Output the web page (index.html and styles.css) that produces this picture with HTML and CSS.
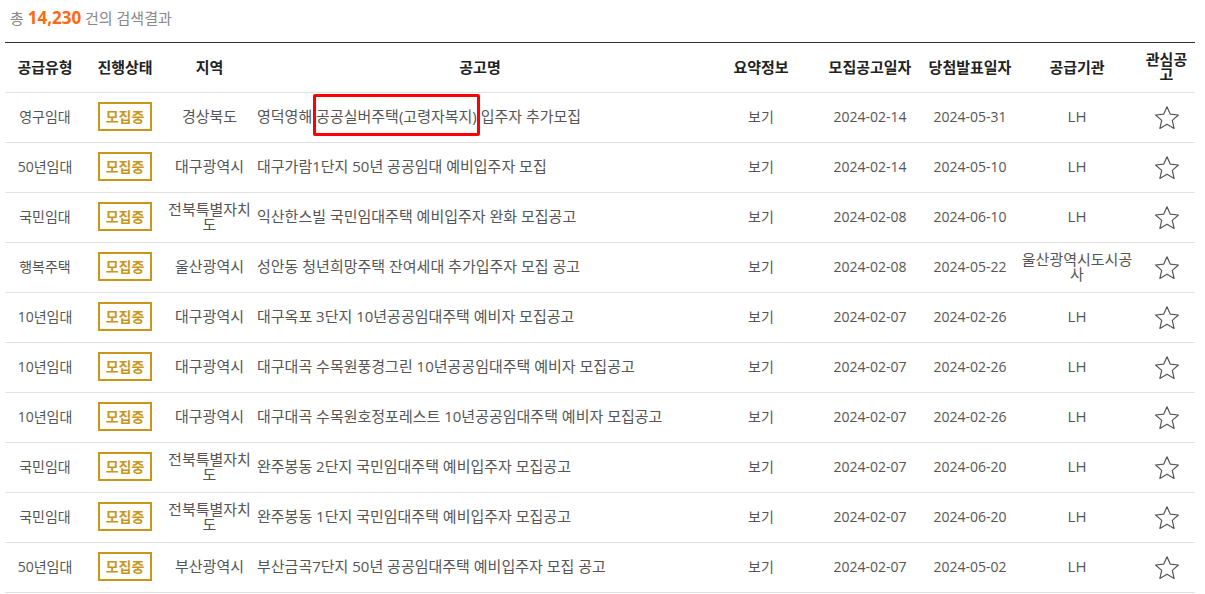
FILE: index.html
```html
<!DOCTYPE html>
<html lang="ko">
<head>
<meta charset="utf-8">
<title>검색결과</title>
<link rel="stylesheet" href="styles.css">
</head>
<body>
<div class="wrap">
  <p class="summary">총 <strong class="count">14,230</strong> 건의 검색결과</p>
  <table class="list">
    <colgroup>
      <col class="c-type"><col class="c-state"><col class="c-region"><col class="c-name"><col class="c-info"><col class="c-date"><col class="c-date2"><col class="c-org"><col class="c-fav">
    </colgroup>
    <thead>
      <tr>
        <th>공급유형</th><th>진행상태</th><th>지역</th><th>공고명</th><th>요약정보</th><th>모집공고일자</th><th>당첨발표일자</th><th>공급기관</th><th>관심공고</th>
      </tr>
    </thead>
    <tbody>
      <tr>
        <td class="type">영구임대</td><td><span class="badge">모집중</span></td><td class="region">경상북도</td>
        <td class="name">영덕영해 <span class="mark">공공실버주택(고령자복지)</span> 입주자 추가모집</td>
        <td>보기</td><td>2024-02-14</td><td>2024-05-31</td><td class="org">LH</td>
        <td><svg class="star" viewBox="0 0 26 26"><path d="M13 1.8 L16.3 9.2 L24.4 10 L18.3 15.4 L20.1 23.4 L13 19.2 L5.9 23.4 L7.7 15.4 L1.6 10 L9.7 9.2 Z"/></svg></td>
      </tr>
      <tr>
        <td class="type">50년임대</td><td><span class="badge">모집중</span></td><td class="region">대구광역시</td>
        <td class="name">대구가람1단지 50년 공공임대 예비입주자 모집</td>
        <td>보기</td><td>2024-02-14</td><td>2024-05-10</td><td class="org">LH</td>
        <td><svg class="star" viewBox="0 0 26 26"><path d="M13 1.8 L16.3 9.2 L24.4 10 L18.3 15.4 L20.1 23.4 L13 19.2 L5.9 23.4 L7.7 15.4 L1.6 10 L9.7 9.2 Z"/></svg></td>
      </tr>
      <tr>
        <td class="type">국민임대</td><td><span class="badge">모집중</span></td><td class="region">전북특별자치도</td>
        <td class="name">익산한스빌 국민임대주택 예비입주자 완화 모집공고</td>
        <td>보기</td><td>2024-02-08</td><td>2024-06-10</td><td class="org">LH</td>
        <td><svg class="star" viewBox="0 0 26 26"><path d="M13 1.8 L16.3 9.2 L24.4 10 L18.3 15.4 L20.1 23.4 L13 19.2 L5.9 23.4 L7.7 15.4 L1.6 10 L9.7 9.2 Z"/></svg></td>
      </tr>
      <tr>
        <td class="type">행복주택</td><td><span class="badge">모집중</span></td><td class="region">울산광역시</td>
        <td class="name">성안동 청년희망주택 잔여세대 추가입주자 모집 공고</td>
        <td>보기</td><td>2024-02-08</td><td>2024-05-22</td><td class="org">울산광역시도시공사</td>
        <td><svg class="star" viewBox="0 0 26 26"><path d="M13 1.8 L16.3 9.2 L24.4 10 L18.3 15.4 L20.1 23.4 L13 19.2 L5.9 23.4 L7.7 15.4 L1.6 10 L9.7 9.2 Z"/></svg></td>
      </tr>
      <tr>
        <td class="type">10년임대</td><td><span class="badge">모집중</span></td><td class="region">대구광역시</td>
        <td class="name">대구옥포 3단지 10년공공임대주택 예비자 모집공고</td>
        <td>보기</td><td>2024-02-07</td><td>2024-02-26</td><td class="org">LH</td>
        <td><svg class="star" viewBox="0 0 26 26"><path d="M13 1.8 L16.3 9.2 L24.4 10 L18.3 15.4 L20.1 23.4 L13 19.2 L5.9 23.4 L7.7 15.4 L1.6 10 L9.7 9.2 Z"/></svg></td>
      </tr>
      <tr>
        <td class="type">10년임대</td><td><span class="badge">모집중</span></td><td class="region">대구광역시</td>
        <td class="name">대구대곡 수목원풍경그린 10년공공임대주택 예비자 모집공고</td>
        <td>보기</td><td>2024-02-07</td><td>2024-02-26</td><td class="org">LH</td>
        <td><svg class="star" viewBox="0 0 26 26"><path d="M13 1.8 L16.3 9.2 L24.4 10 L18.3 15.4 L20.1 23.4 L13 19.2 L5.9 23.4 L7.7 15.4 L1.6 10 L9.7 9.2 Z"/></svg></td>
      </tr>
      <tr>
        <td class="type">10년임대</td><td><span class="badge">모집중</span></td><td class="region">대구광역시</td>
        <td class="name">대구대곡 수목원호정포레스트 10년공공임대주택 예비자 모집공고</td>
        <td>보기</td><td>2024-02-07</td><td>2024-02-26</td><td class="org">LH</td>
        <td><svg class="star" viewBox="0 0 26 26"><path d="M13 1.8 L16.3 9.2 L24.4 10 L18.3 15.4 L20.1 23.4 L13 19.2 L5.9 23.4 L7.7 15.4 L1.6 10 L9.7 9.2 Z"/></svg></td>
      </tr>
      <tr>
        <td class="type">국민임대</td><td><span class="badge">모집중</span></td><td class="region">전북특별자치도</td>
        <td class="name">완주봉동 2단지 국민임대주택 예비입주자 모집공고</td>
        <td>보기</td><td>2024-02-07</td><td>2024-06-20</td><td class="org">LH</td>
        <td><svg class="star" viewBox="0 0 26 26"><path d="M13 1.8 L16.3 9.2 L24.4 10 L18.3 15.4 L20.1 23.4 L13 19.2 L5.9 23.4 L7.7 15.4 L1.6 10 L9.7 9.2 Z"/></svg></td>
      </tr>
      <tr>
        <td class="type">국민임대</td><td><span class="badge">모집중</span></td><td class="region">전북특별자치도</td>
        <td class="name">완주봉동 1단지 국민임대주택 예비입주자 모집공고</td>
        <td>보기</td><td>2024-02-07</td><td>2024-06-20</td><td class="org">LH</td>
        <td><svg class="star" viewBox="0 0 26 26"><path d="M13 1.8 L16.3 9.2 L24.4 10 L18.3 15.4 L20.1 23.4 L13 19.2 L5.9 23.4 L7.7 15.4 L1.6 10 L9.7 9.2 Z"/></svg></td>
      </tr>
      <tr>
        <td class="type">50년임대</td><td><span class="badge">모집중</span></td><td class="region">부산광역시</td>
        <td class="name">부산금곡7단지 50년 공공임대주택 예비입주자 모집 공고</td>
        <td>보기</td><td>2024-02-07</td><td>2024-05-02</td><td class="org">LH</td>
        <td><svg class="star" viewBox="0 0 26 26"><path d="M13 1.8 L16.3 9.2 L24.4 10 L18.3 15.4 L20.1 23.4 L13 19.2 L5.9 23.4 L7.7 15.4 L1.6 10 L9.7 9.2 Z"/></svg></td>
      </tr>
    </tbody>
  </table>
</div>
</body>
</html>
```

FILE: styles.css
```css
* { box-sizing: border-box; }
html, body { margin: 0; padding: 0; background: #fff; }
body {
  font-family: "Open Sans", "Noto Sans CJK KR", sans-serif;
  font-size: 14px;
  color: #555;
}
.wrap { padding: 0 10px 0 5px; }
.summary {
  margin: 0;
  height: 42px;
  padding: 6px 0 0 5px;
  line-height: 24px;
  color: #888;
  font-size: 15px;
}
.count { color: #ff6a10; font-size: 17px; font-weight: 700; }
.list {
  width: 1190px;
  border-collapse: collapse;
  table-layout: fixed;
  border-top: 1px solid #333;
}
.c-type { width: 80px; }
.c-state { width: 80px; }
.c-region { width: 89px; }
.c-name { width: 452px; }
.c-info { width: 110px; }
.c-date { width: 108px; }
.c-date2 { width: 92px; }
.c-org { width: 122px; }
.c-fav { width: 57px; }
.list th, .list td {
  padding: 0 2px;
  text-align: center;
  vertical-align: middle;
  line-height: 15px;
  border-bottom: 1px solid #e2e2e2;
}
.list th {
  height: 50px;
  color: #222;
  font-weight: 700;
  font-size: 15px;
  padding-bottom: 1px;
}
.list td { height: 50px; padding-bottom: 2px; }
.list td.region, .list td.org { font-size: 15px; }
.list td.name { text-align: left; padding-left: 3px; font-size: 15px; }
.badge {
  display: inline-block;
  border: 2px solid #c9961a;
  color: #c9961a;
  font-weight: 700;
  font-size: 14px;
  padding: 0 6px;
  height: 29px;
  line-height: 25px;
}
.mark { position: relative; }
.mark::after {
  content: "";
  position: absolute;
  left: -3px;
  right: -3px;
  top: -12px;
  bottom: -10px;
  border: 3px solid #f00;
  border-radius: 2px;
}
.star {
  display: block;
  width: 26px;
  height: 26px;
  margin: 3px auto 0;
  fill: none;
  stroke: #555;
  stroke-width: 1.2;
  stroke-linejoin: round;
}
```
